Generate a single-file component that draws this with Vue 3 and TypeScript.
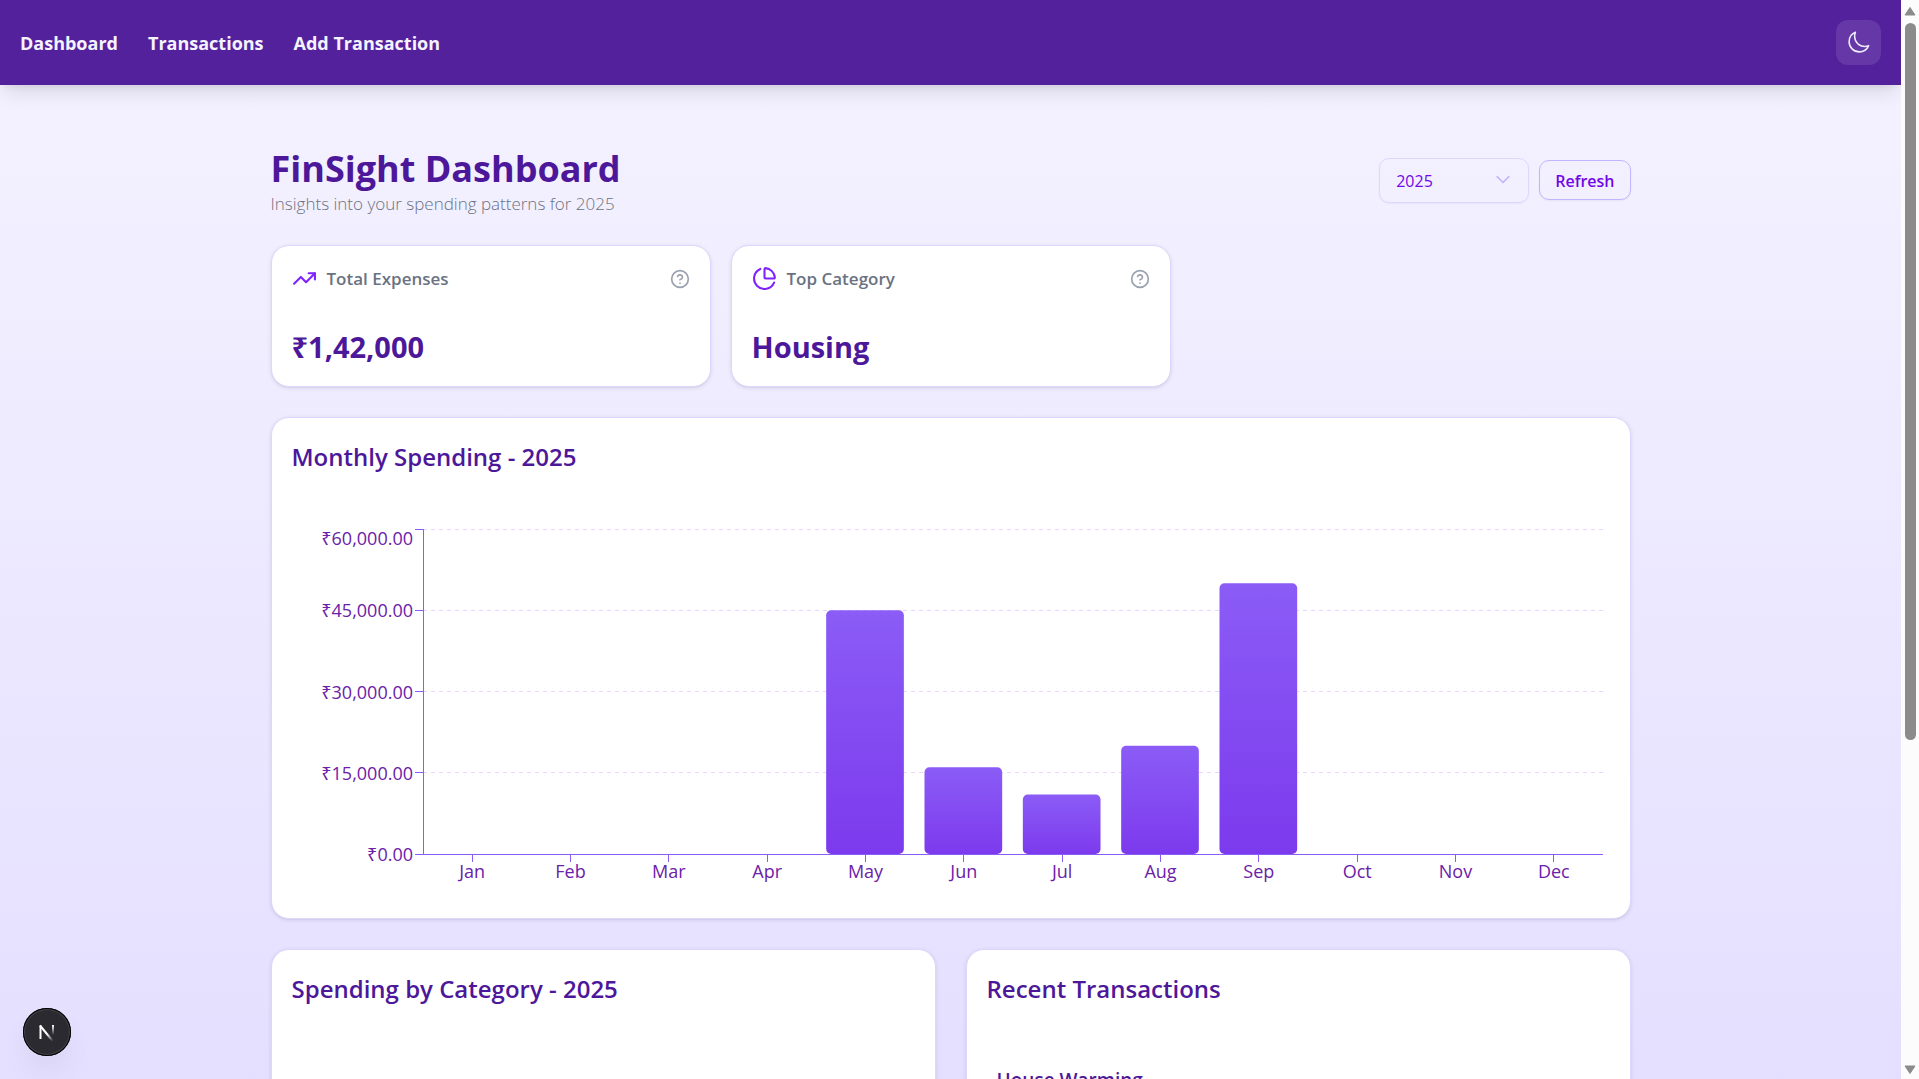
<script setup lang="ts">
import { computed, onBeforeUnmount, onMounted, ref } from 'vue'

interface NavLink {
  label: string
  href: string
}

interface MonthTotal {
  month: string
  amount: number
}

interface Summary {
  label: string
  value: string
  icon: 'trend' | 'pie'
}

const navLinks: NavLink[] = [
  { label: 'Dashboard', href: '#dashboard' },
  { label: 'Transactions', href: '#transactions' },
  { label: 'Add Transaction', href: '#add' },
]

const year = ref('2025')

const summaries: Summary[] = [
  { label: 'Total Expenses', value: '₹1,42,000', icon: 'trend' },
  { label: 'Top Category', value: 'Housing', icon: 'pie' },
]

const months: MonthTotal[] = [
  { month: 'Jan', amount: 0 },
  { month: 'Feb', amount: 0 },
  { month: 'Mar', amount: 0 },
  { month: 'Apr', amount: 0 },
  { month: 'May', amount: 45000 },
  { month: 'Jun', amount: 16000 },
  { month: 'Jul', amount: 11000 },
  { month: 'Aug', amount: 20000 },
  { month: 'Sep', amount: 50000 },
  { month: 'Oct', amount: 0 },
  { month: 'Nov', amount: 0 },
  { month: 'Dec', amount: 0 },
]

const maxAmount = 60000
const chartHeight = 394
const plot = { left: 131, right: 7, top: 25, bottom: 350 }

const chartBox = ref<HTMLElement | null>(null)
const chartWidth = ref(1318)
let observer: ResizeObserver | undefined

onMounted(() => {
  const el = chartBox.value
  if (!el) return
  chartWidth.value = el.clientWidth
  observer = new ResizeObserver(() => {
    chartWidth.value = el.clientWidth
  })
  observer.observe(el)
})

onBeforeUnmount(() => observer?.disconnect())

const plotRight = computed(() => chartWidth.value - plot.right)
const band = computed(() => (plotRight.value - plot.left) / months.length)

function yFor(amount: number): number {
  return plot.bottom - ((plot.bottom - plot.top) * amount) / maxAmount
}

const yTicks = [60000, 45000, 30000, 15000, 0].map((value) => ({
  label: `₹${value.toLocaleString('en-US', { minimumFractionDigits: 2 })}`,
  y: yFor(value),
  // the topmost label hangs below its tick so it stays inside the plot
  textY: value === maxAmount ? yFor(value) + 16 : yFor(value) + 7,
}))

const columns = computed(() =>
  months.map((m, i) => ({
    ...m,
    center: plot.left + band.value * (i + 0.5),
    x: plot.left + band.value * (i + 0.1),
    width: band.value * 0.79,
    y: yFor(m.amount),
    height: plot.bottom - yFor(m.amount),
  })),
)
</script>

<template>
  <div class="window">
    <div class="page">
      <header class="navbar">
        <nav class="links">
          <a v-for="link in navLinks" :key="link.label" :href="link.href">{{ link.label }}</a>
        </nav>
        <button class="theme" type="button" aria-label="Switch to dark theme">
          <svg width="25" height="25" viewBox="0 0 24 24" fill="none" stroke="currentColor" stroke-width="1.5" stroke-linecap="round" stroke-linejoin="round">
            <path d="M21.752 15.002A9.72 9.72 0 0 1 18 15.75c-5.385 0-9.75-4.365-9.75-9.75 0-1.33.266-2.597.748-3.752A9.753 9.753 0 0 0 3 11.25C3 16.635 7.365 21 12.75 21a9.753 9.753 0 0 0 9.002-5.998Z" />
          </svg>
        </button>
      </header>

      <main class="content">
        <div class="heading">
          <div>
            <h1>FinSight Dashboard</h1>
            <p>Insights into your spending patterns for 2025</p>
          </div>
          <div class="controls">
            <div class="year">
              <select v-model="year" aria-label="Year">
                <option>2025</option>
                <option>2024</option>
              </select>
              <svg width="20" height="20" viewBox="0 0 24 24" fill="none" stroke="currentColor" stroke-width="2" stroke-linecap="round" stroke-linejoin="round" aria-hidden="true">
                <path d="m5 8 7 7 7-7" />
              </svg>
            </div>
            <button class="refresh" type="button">Refresh</button>
          </div>
        </div>

        <section class="summaries">
          <article v-for="item in summaries" :key="item.label" class="card summary">
            <div class="summary-head">
              <svg class="summary-icon" width="25" height="25" viewBox="0 0 24 24" fill="none" stroke="currentColor" stroke-width="2" stroke-linecap="round" stroke-linejoin="round" aria-hidden="true">
                <template v-if="item.icon === 'trend'">
                  <path d="M16 7h6v6" />
                  <path d="m22 7-8.5 8.5-5-5L2 17" />
                </template>
                <template v-else>
                  <path d="M21 12c.552 0 1.005-.449.95-.998a10 10 0 0 0-8.953-8.951c-.55-.055-.998.398-.998.95v8a1 1 0 0 0 1 1z" />
                  <path d="M21.21 15.89A10 10 0 1 1 8 2.83" />
                </template>
              </svg>
              <h2>{{ item.label }}</h2>
              <button class="help" type="button" :aria-label="`About ${item.label}`">
                <svg width="20" height="20" viewBox="0 0 24 24" fill="none" stroke="currentColor" stroke-width="2" stroke-linecap="round" stroke-linejoin="round">
                  <circle cx="12" cy="12" r="10" />
                  <path d="M9.09 9a3 3 0 0 1 5.83 1c0 2-3 3-3 3" />
                  <path d="M12 17h.01" />
                </svg>
              </button>
            </div>
            <p class="value">{{ item.value }}</p>
          </article>
        </section>

        <section class="card">
          <h2 class="title">Monthly Spending - 2025</h2>
          <div ref="chartBox" class="chart">
            <svg :width="chartWidth" :height="chartHeight" role="img" aria-label="Monthly spending">
              <defs>
                <linearGradient id="barFill" x1="0" y1="0" x2="0" y2="1">
                  <stop offset="0" stop-color="#8b5cf6" />
                  <stop offset="1" stop-color="#7c3aed" />
                </linearGradient>
              </defs>
              <line v-for="tick in yTicks" :key="`g${tick.label}`" class="grid" :x1="plot.left" :x2="plotRight" :y1="tick.y" :y2="tick.y" />
              <g class="axis">
                <line :x1="plot.left" :x2="plotRight" :y1="plot.bottom" :y2="plot.bottom" />
                <line :x1="plot.left" :x2="plot.left" :y1="plot.top" :y2="plot.bottom" />
                <line v-for="tick in yTicks" :key="`t${tick.label}`" :x1="plot.left - 8" :x2="plot.left" :y1="tick.y" :y2="tick.y" />
                <line v-for="col in columns" :key="`m${col.month}`" :x1="col.center" :x2="col.center" :y1="plot.bottom" :y2="plot.bottom + 8" />
              </g>
              <text v-for="tick in yTicks" :key="tick.label" :x="plot.left - 10" :y="tick.textY" text-anchor="end">{{ tick.label }}</text>
              <text v-for="col in columns" :key="col.month" :x="col.center" :y="plot.bottom + 24" text-anchor="middle">{{ col.month }}</text>
              <rect v-for="col in columns" :key="`b${col.month}`" :x="col.x" :y="col.y" :width="col.width" :height="col.height" rx="5" fill="url(#barFill)" />
            </svg>
          </div>
        </section>

        <div class="pair">
          <section class="card">
            <h2 class="title">Spending by Category - 2025</h2>
          </section>
          <section class="card">
            <h2 class="title">Recent Transactions</h2>
            <ul class="recent">
              <li>House Warming</li>
            </ul>
          </section>
        </div>
      </main>
    </div>

    <div class="scrollbar" aria-hidden="true">
      <svg width="12" height="10" viewBox="0 0 12 10"><path d="M6 1.5 11 9H1Z" /></svg>
      <div class="track"><div class="thumb"></div></div>
      <svg width="12" height="10" viewBox="0 0 12 10"><path d="M6 8.500 11 1H1Z" /></svg>
    </div>

    <button class="devtools" type="button" aria-label="Open developer tools">
      <svg width="48" height="48" viewBox="0 0 48 48" fill="none">
        <defs>
          <linearGradient id="diag" x1="25" y1="25" x2="31" y2="32" gradientUnits="userSpaceOnUse">
            <stop stop-color="#fff" />
            <stop offset="1" stop-color="#fff" stop-opacity="0" />
          </linearGradient>
          <linearGradient id="stem" x1="30" y1="17" x2="30" y2="27" gradientUnits="userSpaceOnUse">
            <stop stop-color="#fff" />
            <stop offset="1" stop-color="#fff" stop-opacity="0" />
          </linearGradient>
        </defs>
        <path d="M17.500 31V17.500" stroke="#fff" stroke-width="2" />
        <path d="M17 17.500 30.500 34" stroke="url(#diag)" stroke-width="2" />
        <path d="M30 17v11" stroke="url(#stem)" stroke-width="2" />
      </svg>
    </button>
  </div>
</template>

<style>
body {
  margin: 0;
}
</style>

<style scoped>
* {
  box-sizing: border-box;
}

.window {
  display: flex;
  height: 100vh;
  overflow: hidden;
  font-family: 'Open Sans', 'Noto Sans', sans-serif;
}

h1,
h2,
p,
ul {
  margin: 0;
  padding: 0;
}

button,
select {
  font: inherit;
}

.page {
  flex: 1;
  min-width: 0;
  overflow: hidden;
  background: linear-gradient(#f5f3ff, #ddd6ff) top / 100% 145vh no-repeat;
}

.navbar {
  display: flex;
  align-items: center;
  justify-content: space-between;
  padding: 20px;
  background: #54219d;
  box-shadow:
    0 12px 19px -4px rgba(0, 0, 0, 0.1),
    0 5px 8px -5px rgba(0, 0, 0, 0.1);
}

.links {
  display: flex;
  gap: 30px;
}

.links a {
  color: #f5f3ff;
  font-size: 18px;
  font-weight: 700;
  line-height: 30px;
  text-decoration: none;
}

.theme {
  display: grid;
  place-items: center;
  width: 45px;
  height: 45px;
  padding: 0;
  border: 0;
  border-radius: 12px;
  background: rgba(255, 255, 255, 0.1);
  color: #ede9fe;
}

.content {
  display: flex;
  flex-direction: column;
  gap: 30px;
  max-width: 1440px;
  margin: 0 auto;
  padding: 60px 40px;
}

.heading {
  display: flex;
  align-items: center;
  justify-content: space-between;
}

.heading h1 {
  color: #4d179a;
  font-size: 36px;
  font-weight: 700;
  line-height: 48px;
}

.heading p {
  color: #6a7282;
  font-size: 17px;
  font-weight: 350;
  line-height: 22px;
}

.controls {
  display: flex;
  align-items: center;
  gap: 10px;
}

.year {
  position: relative;
}

.year select {
  appearance: none;
  display: block;
  width: 150px;
  height: 45px;
  padding: 2px 16px 0;
  border: 1px solid #ddd6ff;
  border-radius: 10px;
  background: transparent;
  box-shadow: 0 1px 2px rgba(0, 0, 0, 0.05);
  color: #7008e7;
  font-size: 16px;
}

.year svg {
  position: absolute;
  top: 12px;
  right: 16px;
  color: #c4b4ff;
  pointer-events: none;
}

.refresh {
  height: 40px;
  padding: 2px 15px 0;
  border: 1px solid #c4b4ff;
  border-radius: 10px;
  background: transparent;
  box-shadow: 0 1px 2px rgba(0, 0, 0, 0.05);
  color: #7008e7;
  font-size: 16px;
  font-weight: 600;
}

.summaries {
  display: grid;
  grid-template-columns: repeat(3, 1fr);
  gap: 20px;
}

.card {
  padding: 20px;
  border: 1px solid #ddd6ff;
  border-radius: 18px;
  background: #fff;
  box-shadow:
    0 1px 4px rgba(0, 0, 0, 0.1),
    0 1px 2px -1px rgba(0, 0, 0, 0.1);
}

.summary {
  display: flex;
  flex-direction: column;
  gap: 36px;
}

.summary-head {
  display: flex;
  align-items: center;
  gap: 10px;
}

.summary-icon {
  color: #7f22fe;
}

.summary-head h2 {
  flex: 1;
  color: #6a7282;
  font-size: 17px;
  font-weight: 550;
  line-height: 25px;
}

.help {
  display: flex;
  padding: 0;
  border: 0;
  background: none;
  color: #99a1af;
}

.value {
  color: #4d179a;
  font-size: 29px;
  font-weight: 700;
  line-height: 39px;
}

.title {
  color: #4d179a;
  font-size: 24px;
  font-weight: 600;
  line-height: 38px;
}

.chart {
  margin-top: 28px;
}

.chart svg {
  display: block;
}

.chart text {
  fill: #6b21a8;
  font-size: 18px;
  font-weight: 400;
}

.grid {
  stroke: #e9d5ff;
  stroke-dasharray: 4 4;
  shape-rendering: crispEdges;
}

.axis line {
  stroke: #8b5cf6;
  shape-rendering: crispEdges;
}

.pair {
  display: grid;
  grid-template-columns: 1fr 1fr;
  gap: 30px;
}

.pair .card {
  min-height: 550px;
}

.recent {
  padding: 60px 10px 0;
  list-style: none;
}

.recent li {
  color: #4d179a;
  font-size: 19px;
  font-weight: 600;
  line-height: 25px;
}

.scrollbar {
  display: flex;
  flex-direction: column;
  align-items: center;
  gap: 7px;
  width: 18px;
  padding: 6px 0 4px;
  background: #fcfcfc;
}

.scrollbar svg {
  fill: #8b8b8b;
  stroke: #8b8b8b;
  stroke-linejoin: round;
}

.track {
  flex: 1;
}

.thumb {
  width: 11px;
  height: calc(69% + 3px);
  border-radius: 6px;
  background: #8b8b8b;
}

.devtools {
  position: fixed;
  bottom: 23px;
  left: 23px;
  width: 48px;
  height: 48px;
  padding: 0;
  border: 0;
  border-radius: 50%;
  background: #2b2a30;
  box-shadow:
    inset 0 0 0 1px #000,
    inset 0 0 0 2px #444349,
    0 16px 32px -8px rgba(0, 0, 0, 0.1);
}

.devtools svg {
  display: block;
}
</style>
